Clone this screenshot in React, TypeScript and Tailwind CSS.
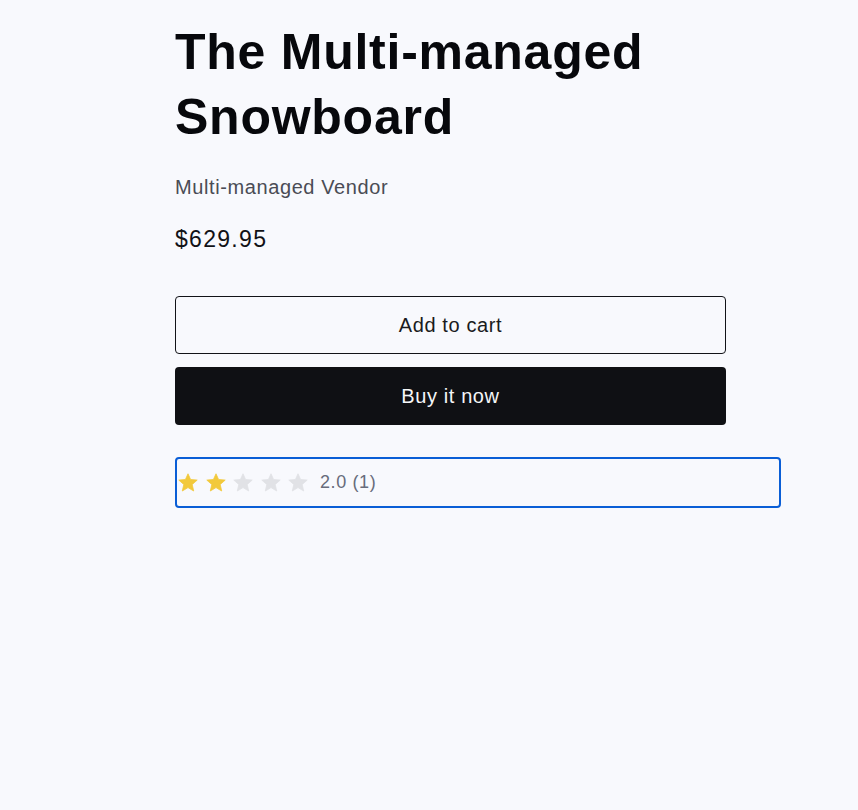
import React from "react";

function Star({ filled }: { filled: boolean }) {
  return (
    <svg width="20" height="19" viewBox="0 0 20 19" className="block shrink-0">
      <path
        d="M10 0.8 L12.6 6.5 L19.2 7.1 L14.2 11.5 L15.7 18 L10 14.6 L4.3 18 L5.8 11.5 L0.8 7.1 L7.4 6.5 Z"
        fill={filled ? "#f2c93c" : "#e1e2e6"}
        stroke={filled ? "#f2c93c" : "#e1e2e6"}
        strokeWidth="0.8"
        strokeLinejoin="round"
      />
    </svg>
  );
}

export default function App() {
  return (
    <div className="min-h-[810px] w-full bg-[#f8f9fd] font-['Liberation_Sans',Arial,sans-serif]">
      <div className="ml-[175px] w-[606px] pt-[20px]">
        <h1 className="text-[50px] font-bold leading-[65px] tracking-[0.75px] text-[#07080c]">
          The Multi-managed
          <br />
          Snowboard
        </h1>
        <p className="mt-[22px] text-[20px] leading-[30px] tracking-[0.6px] text-[#4a4c55]">
          Multi-managed Vendor
        </p>
        <p className="mt-[23px] text-[23px] leading-[28px] tracking-[1.3px] text-[#111216]">
          $629.95
        </p>
        <div className="mt-[43px] flex w-[551px] flex-col gap-[13px]">
          <button className="flex h-[58px] items-center justify-center rounded-[4px] border border-[#121318] bg-transparent text-[20px] tracking-[0.6px] text-[#1a1b20]">
            Add to cart
          </button>
          <button className="flex h-[58px] items-center justify-center rounded-[4px] bg-[#0f1014] text-[20px] tracking-[0.6px] text-[#f5f6f8]">
            Buy it now
          </button>
        </div>
        <div className="mt-[32px] flex h-[51px] w-[606px] items-center rounded-[4px] border-2 border-[#0a5ed6] pl-[1px]">
          <div className="flex items-center gap-[7.5px]">
            <Star filled />
            <Star filled />
            <Star filled={false} />
            <Star filled={false} />
            <Star filled={false} />
          </div>
          <span className="ml-[12px] text-[18px] tracking-[0.6px] text-[#676c7b]">2.0 (1)</span>
        </div>
      </div>
    </div>
  );
}
